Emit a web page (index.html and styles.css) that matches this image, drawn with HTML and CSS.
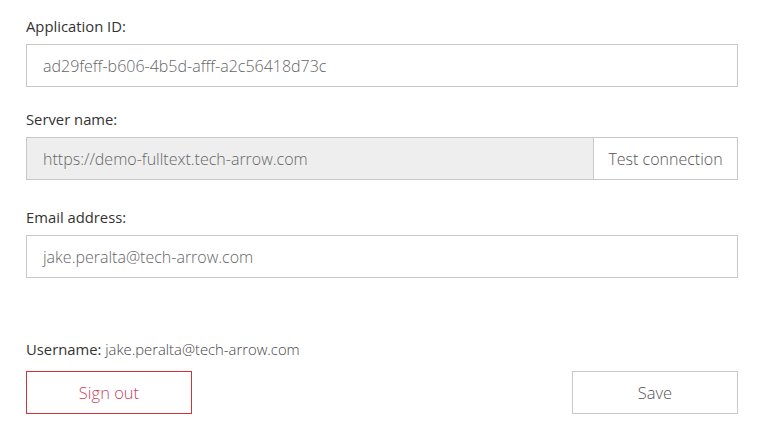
FILE: index.html
```html
<!DOCTYPE html>
<html>
<head>
<meta charset="utf-8">
<link rel="stylesheet" href="styles.css">
</head>
<body>
<div class="form">
  <div class="field f1">
    <div class="label">Application ID:</div>
    <div class="input">ad29feff-b606-4b5d-afff-a2c56418d73c</div>
  </div>
  <div class="field f2">
    <div class="label">Server name:</div>
    <div class="group">
      <div class="input disabled">https://demo-fulltext.tech-arrow.com</div>
      <div class="addon">Test connection</div>
    </div>
  </div>
  <div class="field f3">
    <div class="label">Email address:</div>
    <div class="input">jake.peralta@tech-arrow.com</div>
  </div>
  <div class="user"><span class="key">Username:</span> <span class="val">jake.peralta@tech-arrow.com</span></div>
  <div class="actions">
    <div class="btn danger">Sign out</div>
    <div class="btn">Save</div>
  </div>
</div>
</body>
</html>
```
FILE: styles.css
```css
html, body {
  margin: 0;
  padding: 0;
  background: #ffffff;
}
.form {
  padding: 16px 33px 0 26px;
  font-family: "Open Sans", "Noto Sans", sans-serif;
  color: #333333;
}
.field {
  display: flex;
  flex-direction: column;
  gap: 8px;
}
.f1 { margin-bottom: 22px; }
.f2 { margin-bottom: 27px; }
.f3 { margin-bottom: 61px; }
.label {
  font-size: 14.8px;
  line-height: 20px;
  height: 20px;
  color: #333333;
}
.input {
  box-sizing: border-box;
  height: 43px;
  border: 1px solid #c8c8c8;
  padding: 0 16px;
  display: flex;
  align-items: center;
  font-size: 16px;
  font-weight: 300;
  color: #666666;
  background: #ffffff;
}
.group {
  display: flex;
}
.group .input {
  flex: 1;
}
.input.disabled {
  background: #eeeeee;
  border-right: none;
}
.addon {
  box-sizing: border-box;
  height: 43px;
  width: 145px;
  border: 1px solid #c8c8c8;
  display: flex;
  align-items: center;
  justify-content: center;
  font-size: 16px;
  font-weight: 300;
  color: #555555;
  background: #ffffff;
}
.user {
  font-size: 14.8px;
  line-height: 20px;
  height: 20px;
}
.user .key { color: #333333; }
.user .val { color: #444444; font-weight: 300; }
.actions {
  margin-top: 12px;
  display: flex;
  justify-content: space-between;
}
.btn {
  box-sizing: border-box;
  width: 166px;
  height: 43px;
  border: 1px solid #c8c8c8;
  display: flex;
  align-items: center;
  justify-content: center;
  font-size: 16.5px;
  font-weight: 300;
  color: #555555;
}
.btn.danger {
  border-color: #d13438;
  color: #c8455d;
}
```
